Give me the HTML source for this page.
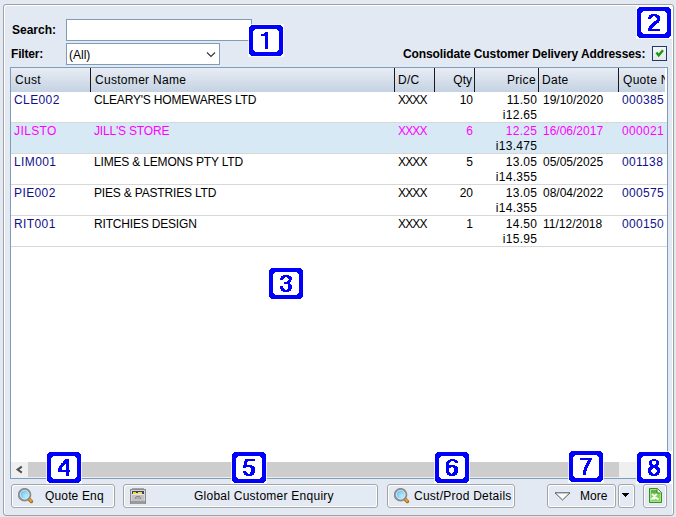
<!DOCTYPE html>
<html><head><meta charset="utf-8">
<style>
*{margin:0;padding:0;box-sizing:border-box}
html,body{width:676px;height:517px;overflow:hidden;background:#E3E9F2;font-family:"Liberation Sans",sans-serif;font-size:12px;color:#000}
.a{position:absolute}
.panel{left:3px;top:4px;width:671px;height:512px;border:1px solid #A0A0A0;border-radius:3px;box-shadow:inset 1px 1px 0 #fff,inset -1px 0 0 #fff}
.lbl{font-weight:bold;line-height:14px;white-space:nowrap}
.inp{background:#fff;border:1px solid #7F9DB9}
.tbl{left:10px;top:67px;width:658px;height:412px;border:1px solid #7F9DB9;background:#fff;overflow:hidden}
.hdr{left:0;top:0;width:654px;height:24px;overflow:hidden;background:linear-gradient(#E8EDF5,#C4D2E2)}
.sep{top:0;width:1px;height:24px;background:#1a1a1a}
.ht{top:5px;line-height:14px;white-space:nowrap;letter-spacing:0.3px}
.row{left:0;width:656px;height:31px;border-bottom:1px solid #D8D8D8}
.c{line-height:15px;white-space:nowrap;top:1px}
.up{letter-spacing:-0.18px}
.xx{letter-spacing:-0.85px}
.blue{color:#10108A}
.mag{color:#FF00FF}
.r{text-align:right}
.btn{top:484px;height:24px;border:1px solid #A5A5A5;border-radius:3px;box-shadow:inset 1px 1px 0 #fff,inset -1px -1px 0 #fff;background:#E4EAF3}
.bt{line-height:14px;white-space:nowrap;top:4px;letter-spacing:0.25px}
</style></head><body>
<div class="a panel"></div>

<div class="a lbl" style="left:12px;top:23px">Search:</div>
<div class="a lbl" style="left:11px;top:47px;letter-spacing:-0.2px">Filter:</div>
<div class="a inp" style="left:66px;top:19px;width:186px;height:22px"></div>
<div class="a inp" style="left:66px;top:43px;width:154px;height:22px">
  <div class="a" style="left:2px;top:4px;line-height:14px">(All)</div>
  <svg class="a" style="left:139px;top:7px" width="10" height="7" viewBox="0 0 10 7"><path d="M1 1.5 L5 5.5 L9 1.5" fill="none" stroke="#333" stroke-width="1.1"/></svg>
</div>
<div class="a lbl" style="left:403px;top:47px;letter-spacing:-0.1px">Consolidate Customer Delivery Addresses:</div>
<div class="a" style="left:652px;top:46px;width:15px;height:15px;border:1px solid #1C3D6B;background:linear-gradient(#F6F6F6,#E6E6E6)"><svg class="a" style="left:2px;top:1px" width="11" height="11" viewBox="0 0 11 11"><path d="M1.4 4.4 L3.7 7.3 L8 2.2" fill="none" stroke="#1A9A1A" stroke-width="2.4"/></svg></div>

<div class="a tbl">
  <div class="a hdr">
    <div class="a ht" style="left:4px">Cust</div>
    <div class="a sep" style="left:79px"></div>
    <div class="a ht" style="left:84px">Customer Name</div>
    <div class="a sep" style="left:383px"></div>
    <div class="a ht" style="left:387px">D/C</div>
    <div class="a sep" style="left:423px"></div>
    <div class="a ht r" style="left:424px;width:37px;letter-spacing:0">Qty</div>
    <div class="a sep" style="left:463px"></div>
    <div class="a ht r" style="left:464px;width:61px;letter-spacing:0.35px">Price</div>
    <div class="a sep" style="left:527px"></div>
    <div class="a ht" style="left:531px">Date</div>
    <div class="a sep" style="left:607px"></div>
    <div class="a ht" style="left:612px">Quote No</div>
  </div>
  <div class="a row" style="top:24px">
    <div class="a c blue" style="left:3px;letter-spacing:0.4px">CLE002</div>
    <div class="a c up" style="left:83px">CLEARY'S HOMEWARES LTD</div>
    <div class="a c xx" style="left:387px">XXXX</div>
    <div class="a c r" style="left:424px;width:38px">10</div>
    <div class="a c r" style="left:464px;width:62.3px;letter-spacing:0.3px"><span class="">11.50</span><br>i12.65</div>
    <div class="a c" style="left:532px">19/10/2020</div>
    <div class="a c blue" style="left:611px;letter-spacing:0.33px">000385</div>
  </div>
  <div class="a row" style="top:55px;background:#D8E9F6">
    <div class="a c mag" style="left:3px;letter-spacing:0.4px">JILSTO</div>
    <div class="a c up mag" style="left:83px">JILL'S STORE</div>
    <div class="a c xx mag" style="left:387px">XXXX</div>
    <div class="a c r mag" style="left:424px;width:38px">6</div>
    <div class="a c r" style="left:464px;width:62.3px;letter-spacing:0.3px"><span class="mag">12.25</span><br>i13.475</div>
    <div class="a c mag" style="left:532px">16/06/2017</div>
    <div class="a c mag" style="left:611px;letter-spacing:0.33px">000021</div>
  </div>
  <div class="a row" style="top:86px">
    <div class="a c blue" style="left:3px;letter-spacing:0.4px">LIM001</div>
    <div class="a c up" style="left:83px">LIMES &amp; LEMONS PTY LTD</div>
    <div class="a c xx" style="left:387px">XXXX</div>
    <div class="a c r" style="left:424px;width:38px">5</div>
    <div class="a c r" style="left:464px;width:62.3px;letter-spacing:0.3px"><span class="">13.05</span><br>i14.355</div>
    <div class="a c" style="left:532px">05/05/2025</div>
    <div class="a c blue" style="left:611px;letter-spacing:0.33px">001138</div>
  </div>
  <div class="a row" style="top:117px">
    <div class="a c blue" style="left:3px;letter-spacing:0.4px">PIE002</div>
    <div class="a c up" style="left:83px">PIES &amp; PASTRIES LTD</div>
    <div class="a c xx" style="left:387px">XXXX</div>
    <div class="a c r" style="left:424px;width:38px">20</div>
    <div class="a c r" style="left:464px;width:62.3px;letter-spacing:0.3px"><span class="">13.05</span><br>i14.355</div>
    <div class="a c" style="left:532px">08/04/2022</div>
    <div class="a c blue" style="left:611px;letter-spacing:0.33px">000575</div>
  </div>
  <div class="a row" style="top:148px">
    <div class="a c blue" style="left:3px;letter-spacing:0.4px">RIT001</div>
    <div class="a c up" style="left:83px">RITCHIES DESIGN</div>
    <div class="a c xx" style="left:387px">XXXX</div>
    <div class="a c r" style="left:424px;width:38px">1</div>
    <div class="a c r" style="left:464px;width:62.3px;letter-spacing:0.3px"><span class="">14.50</span><br>i15.95</div>
    <div class="a c" style="left:532px">11/12/2018</div>
    <div class="a c blue" style="left:611px;letter-spacing:0.33px">000150</div>
  </div>

  <div class="a" style="left:0;top:394px;width:656px;height:16px;background:#EFEFEF"></div>
  <svg class="a" style="left:4px;top:397px" width="9" height="10" viewBox="0 0 9 10"><path d="M6.8 1.6 L2.6 4.6 L6.8 7.6" fill="none" stroke="#505050" stroke-width="2"/></svg>
  <div class="a" style="left:17px;top:394px;width:591px;height:15px;background:#CDCDCD"></div>
</div>

<div class="a btn" style="left:11px;width:104px"><svg class="a" style="left:6px;top:3px" width="17" height="17" viewBox="0 0 17 17"><defs><radialGradient id="lg1" cx="0.62" cy="0.62" r="0.75"><stop offset="0" stop-color="#BDEEFB"/><stop offset="0.5" stop-color="#86CEF3"/><stop offset="1" stop-color="#3A94DE"/></radialGradient></defs><path d="M11.4 11.4 L13.4 13.4" stroke="#B07018" stroke-width="3.6" stroke-linecap="round"/><path d="M11.8 11.6 L13.2 13.0" stroke="#F8B030" stroke-width="1.5" stroke-linecap="round"/><circle cx="6.6" cy="6.7" r="5.8" fill="url(#lg1)" stroke="#8C8C8C" stroke-width="2"/><circle cx="6.6" cy="6.7" r="4.4" fill="none" stroke="#FFFFFF" stroke-opacity="0.85" stroke-width="0.8"/></svg><div class="a bt" style="left:33px;letter-spacing:0.15px">Quote Enq</div></div>
<div class="a btn" style="left:123px;width:255px"><svg class="a" style="left:6px;top:3px" width="16" height="16" viewBox="0 0 16 16" shape-rendering="crispEdges"><rect x="2" y="0" width="12" height="1" fill="#A4A4A4"/><rect x="0" y="1" width="16" height="15" fill="#8C8C8C"/><rect x="1" y="2" width="14" height="11" fill="#D6D6D6"/><rect x="2" y="3" width="12" height="3" fill="#3A4462"/><rect x="3" y="4" width="3" height="2" fill="#F2DA3C"/><rect x="6" y="5" width="2" height="1" fill="#F2DA3C"/><rect x="8" y="4" width="4" height="2" fill="#F4E050"/><rect x="2" y="6" width="12" height="7" fill="#C2C2C2"/><rect x="2" y="6" width="12" height="1" fill="#E6E6E6"/><rect x="6" y="8" width="4" height="1" fill="#8E8E8E"/><rect x="5" y="9" width="1" height="2" fill="#8E8E8E"/><rect x="10" y="9" width="1" height="2" fill="#8E8E8E"/><rect x="6" y="9" width="4" height="2" fill="#ADADAD"/><rect x="1" y="13" width="14" height="3" fill="#9A9A9A"/></svg><div class="a bt" style="left:70px">Global Customer Enquiry</div></div>
<div class="a btn" style="left:387px;width:128px"><svg class="a" style="left:6px;top:3px" width="17" height="17" viewBox="0 0 17 17"><defs><radialGradient id="lg2" cx="0.62" cy="0.62" r="0.75"><stop offset="0" stop-color="#BDEEFB"/><stop offset="0.5" stop-color="#86CEF3"/><stop offset="1" stop-color="#3A94DE"/></radialGradient></defs><path d="M11.4 11.4 L13.4 13.4" stroke="#B07018" stroke-width="3.6" stroke-linecap="round"/><path d="M11.8 11.6 L13.2 13.0" stroke="#F8B030" stroke-width="1.5" stroke-linecap="round"/><circle cx="6.6" cy="6.7" r="5.8" fill="url(#lg2)" stroke="#8C8C8C" stroke-width="2"/><circle cx="6.6" cy="6.7" r="4.4" fill="none" stroke="#FFFFFF" stroke-opacity="0.85" stroke-width="0.8"/></svg><div class="a bt" style="left:26px">Cust/Prod Details</div></div>
<div class="a btn" style="left:547px;width:69px"><svg class="a" style="left:6px;top:7px" width="17" height="10" viewBox="0 0 17 10"><path d="M1 0.8 L16 0.8 L8.5 8 Z" fill="#FAFAFA" stroke="#555" stroke-width="1" stroke-linejoin="miter"/></svg><div class="a bt" style="left:32px;letter-spacing:0">More</div></div>
<div class="a btn" style="left:618px;width:17px"><svg class="a" style="left:3px;top:8px" width="8" height="5" viewBox="0 0 8 5" shape-rendering="crispEdges"><path d="M0 0H7V1H6V2H5V3H4V4H3V3H2V2H1V1H0Z" fill="#000"/></svg></div>
<div class="a btn" style="left:643px;width:24px"><svg class="a" style="left:5px;top:3px" width="14" height="16" viewBox="0 0 14 16"><path d="M0.5 0.5 H8.5 L12.5 4.5 V14.5 H0.5 Z" fill="#88D064" stroke="#3C8C24" stroke-width="1"/><path d="M1.5 1.5 H8 L11.5 5 V13.5 H1.5 Z" fill="none" stroke="#A6E684" stroke-width="1"/><rect x="2" y="2" width="6" height="3.5" fill="#66AE46"/><path d="M8.2 1 L12 4.8 H8.2 Z" fill="#FFFFFF"/><path d="M8 1.5 V5 H11.5" fill="none" stroke="#3C8C24" stroke-width="1.1"/><path d="M3 5.8 L7.2 10 L9.6 11.4 M7.8 5.8 L3.2 10.6 H6.2" stroke="#FFFFFF" stroke-width="1.7" fill="none"/></svg></div>

<svg class="a" style="left:248px;top:24px" width="36" height="33" shape-rendering="crispEdges"><g transform="translate(1 1)"><rect x="-1" y="-1" width="36" height="33" fill="#fff" fill-opacity="0.7"/><rect x="2" y="2" width="30" height="27" fill="#fff"/><path d="M2 0H32V1H33V2H34V29H33V30H32V31H2V30H1V29H0V2H1V1H2ZM6 4H28V5H29V6H30V25H29V26H28V27H6V26H5V25H4V6H5V5H6Z" fill="#00f" fill-rule="evenodd"/><path d="M16 7h3v1h-3zM15 8h4v1h-4zM12 9h7v1h-7zM12 10h7v1h-7zM16 11h3v1h-3zM16 12h3v1h-3zM16 13h3v1h-3zM16 14h3v1h-3zM16 15h3v1h-3zM16 16h3v1h-3zM16 17h3v1h-3zM16 18h3v1h-3zM16 19h3v1h-3zM16 20h3v1h-3zM16 21h3v1h-3zM16 22h3v1h-3zM16 23h3v1h-3z" fill="#00f"/></g></svg>
<svg class="a" style="left:636px;top:6px" width="36" height="33" shape-rendering="crispEdges"><g transform="translate(1 1)"><rect x="-1" y="-1" width="36" height="33" fill="#fff" fill-opacity="0.7"/><rect x="2" y="2" width="30" height="27" fill="#fff"/><path d="M2 0H32V1H33V2H34V29H33V30H32V31H2V30H1V29H0V2H1V1H2ZM6 4H28V5H29V6H30V25H29V26H28V27H6V26H5V25H4V6H5V5H6Z" fill="#00f" fill-rule="evenodd"/><path d="M14 7h6v1h-6zM12 8h10v1h-10zM12 9h4v1h-4zM18 9h5v1h-5zM11 10h4v1h-4zM19 10h4v1h-4zM11 11h3v1h-3zM20 11h3v1h-3zM20 12h3v1h-3zM19 13h4v1h-4zM17 14h5v1h-5zM16 15h6v1h-6zM15 16h5v1h-5zM14 17h5v1h-5zM13 18h5v1h-5zM12 19h5v1h-5zM12 20h4v1h-4zM11 21h4v1h-4zM11 22h12v1h-12zM11 23h12v1h-12z" fill="#00f"/></g></svg>
<svg class="a" style="left:268px;top:267px" width="36" height="33" shape-rendering="crispEdges"><g transform="translate(1 1)"><rect x="-1" y="-1" width="36" height="33" fill="#fff" fill-opacity="0.7"/><rect x="2" y="2" width="30" height="27" fill="#fff"/><path d="M2 0H32V1H33V2H34V29H33V30H32V31H2V30H1V29H0V2H1V1H2ZM6 4H28V5H29V6H30V25H29V26H28V27H6V26H5V25H4V6H5V5H6Z" fill="#00f" fill-rule="evenodd"/><path d="M14 7h6v1h-6zM12 8h10v1h-10zM12 9h4v1h-4zM18 9h5v1h-5zM11 10h4v1h-4zM19 10h4v1h-4zM11 11h3v1h-3zM20 11h3v1h-3zM19 12h3v1h-3zM18 13h4v1h-4zM15 14h6v1h-6zM15 15h6v1h-6zM19 16h3v1h-3zM19 17h4v1h-4zM11 18h3v1h-3zM19 18h4v1h-4zM11 19h3v1h-3zM19 19h4v1h-4zM11 20h4v1h-4zM19 20h4v1h-4zM12 21h4v1h-4zM18 21h4v1h-4zM12 22h10v1h-10zM14 23h6v1h-6z" fill="#00f"/></g></svg>
<svg class="a" style="left:46px;top:451px" width="36" height="33" shape-rendering="crispEdges"><g transform="translate(1 1)"><rect x="-1" y="-1" width="36" height="33" fill="#fff" fill-opacity="0.7"/><rect x="2" y="2" width="30" height="27" fill="#fff"/><path d="M2 0H32V1H33V2H34V29H33V30H32V31H2V30H1V29H0V2H1V1H2ZM6 4H28V5H29V6H30V25H29V26H28V27H6V26H5V25H4V6H5V5H6Z" fill="#00f" fill-rule="evenodd"/><path d="M18 7h4v1h-4zM17 8h5v1h-5zM16 9h6v1h-6zM16 10h6v1h-6zM14 11h8v1h-8zM14 12h4v1h-4zM19 12h3v1h-3zM13 13h4v1h-4zM19 13h3v1h-3zM12 14h4v1h-4zM19 14h3v1h-3zM12 15h3v1h-3zM19 15h3v1h-3zM11 16h4v1h-4zM19 16h3v1h-3zM11 17h4v1h-4zM19 17h3v1h-3zM11 18h12v1h-12zM11 19h12v1h-12zM19 20h3v1h-3zM19 21h3v1h-3zM19 22h3v1h-3zM19 23h3v1h-3z" fill="#00f"/></g></svg>
<svg class="a" style="left:231px;top:451px" width="36" height="33" shape-rendering="crispEdges"><g transform="translate(1 1)"><rect x="-1" y="-1" width="36" height="33" fill="#fff" fill-opacity="0.7"/><rect x="2" y="2" width="30" height="27" fill="#fff"/><path d="M2 0H32V1H33V2H34V29H33V30H32V31H2V30H1V29H0V2H1V1H2ZM6 4H28V5H29V6H30V25H29V26H28V27H6V26H5V25H4V6H5V5H6Z" fill="#00f" fill-rule="evenodd"/><path d="M13 7h10v1h-10zM13 8h10v1h-10zM12 9h4v1h-4zM12 10h3v1h-3zM12 11h3v1h-3zM12 12h3v1h-3zM11 13h9v1h-9zM11 14h11v1h-11zM11 15h3v1h-3zM18 15h5v1h-5zM19 16h4v1h-4zM19 17h4v1h-4zM19 18h4v1h-4zM11 19h3v1h-3zM19 19h4v1h-4zM11 20h4v1h-4zM18 20h5v1h-5zM12 21h4v1h-4zM18 21h4v1h-4zM12 22h10v1h-10zM14 23h6v1h-6z" fill="#00f"/></g></svg>
<svg class="a" style="left:434px;top:451px" width="36" height="33" shape-rendering="crispEdges"><g transform="translate(1 1)"><rect x="-1" y="-1" width="36" height="33" fill="#fff" fill-opacity="0.7"/><rect x="2" y="2" width="30" height="27" fill="#fff"/><path d="M2 0H32V1H33V2H34V29H33V30H32V31H2V30H1V29H0V2H1V1H2ZM6 4H28V5H29V6H30V25H29V26H28V27H6V26H5V25H4V6H5V5H6Z" fill="#00f" fill-rule="evenodd"/><path d="M15 7h5v1h-5zM13 8h9v1h-9zM12 9h4v1h-4zM19 9h4v1h-4zM11 10h4v1h-4zM20 10h3v1h-3zM11 11h3v1h-3zM11 12h3v1h-3zM11 13h9v1h-9zM11 14h11v1h-11zM11 15h5v1h-5zM18 15h5v1h-5zM11 16h3v1h-3zM19 16h4v1h-4zM11 17h3v1h-3zM19 17h4v1h-4zM11 18h3v1h-3zM19 18h4v1h-4zM11 19h3v1h-3zM19 19h4v1h-4zM11 20h4v1h-4zM18 20h5v1h-5zM12 21h4v1h-4zM17 21h5v1h-5zM12 22h10v1h-10zM14 23h6v1h-6z" fill="#00f"/></g></svg>
<svg class="a" style="left:568px;top:450px" width="36" height="33" shape-rendering="crispEdges"><g transform="translate(1 1)"><rect x="-1" y="-1" width="36" height="33" fill="#fff" fill-opacity="0.7"/><rect x="2" y="2" width="30" height="27" fill="#fff"/><path d="M2 0H32V1H33V2H34V29H33V30H32V31H2V30H1V29H0V2H1V1H2ZM6 4H28V5H29V6H30V25H29V26H28V27H6V26H5V25H4V6H5V5H6Z" fill="#00f" fill-rule="evenodd"/><path d="M11 7h12v1h-12zM11 8h12v1h-12zM19 9h3v1h-3zM18 10h4v1h-4zM18 11h3v1h-3zM17 12h4v1h-4zM17 13h3v1h-3zM16 14h4v1h-4zM16 15h3v1h-3zM15 16h4v1h-4zM15 17h3v1h-3zM15 18h3v1h-3zM14 19h4v1h-4zM14 20h3v1h-3zM14 21h3v1h-3zM14 22h3v1h-3zM14 23h3v1h-3z" fill="#00f"/></g></svg>
<svg class="a" style="left:636px;top:451px" width="36" height="33" shape-rendering="crispEdges"><g transform="translate(1 1)"><rect x="-1" y="-1" width="36" height="33" fill="#fff" fill-opacity="0.7"/><rect x="2" y="2" width="30" height="27" fill="#fff"/><path d="M2 0H32V1H33V2H34V29H33V30H32V31H2V30H1V29H0V2H1V1H2ZM6 4H28V5H29V6H30V25H29V26H28V27H6V26H5V25H4V6H5V5H6Z" fill="#00f" fill-rule="evenodd"/><path d="M15 7h4v1h-4zM13 8h8v1h-8zM12 9h3v1h-3zM19 9h3v1h-3zM12 10h3v1h-3zM19 10h3v1h-3zM12 11h3v1h-3zM19 11h3v1h-3zM12 12h4v1h-4zM18 12h4v1h-4zM13 13h8v1h-8zM13 14h8v1h-8zM12 15h10v1h-10zM11 16h5v1h-5zM18 16h5v1h-5zM11 17h4v1h-4zM19 17h4v1h-4zM11 18h3v1h-3zM20 18h3v1h-3zM11 19h3v1h-3zM20 19h3v1h-3zM11 20h4v1h-4zM19 20h4v1h-4zM12 21h4v1h-4zM18 21h4v1h-4zM12 22h10v1h-10zM14 23h6v1h-6z" fill="#00f"/></g></svg>
</body></html>
